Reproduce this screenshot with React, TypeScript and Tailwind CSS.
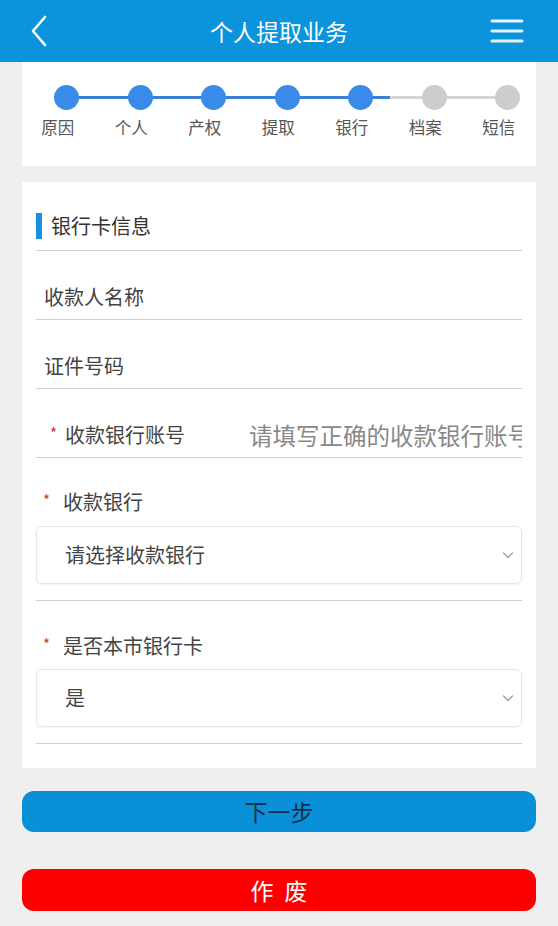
import React from 'react';

const steps = ['原因', '个人', '产权', '提取', '银行', '档案', '短信'];
const current = 4;

const Chevron = () => (
  <svg width="14" height="14" viewBox="0 0 14 14" fill="none">
    <path d="M2.5 5 L7 9.5 L11.5 5" stroke="#9a9a9a" strokeWidth="1.2" strokeLinecap="round" strokeLinejoin="round" />
  </svg>
);

const Required = () => (
  <span className="text-[#cc3333] text-[15px] leading-[22px] mr-[8px] relative top-[-2px]">*</span>
);

const Divider = ({ className = '' }: { className?: string }) => <div className={`h-[1px] bg-[#cfcfcf] ${className}`} />;

const App: React.FC = () => {
  return (
    <div
      className="w-[558px] min-h-[926px] bg-[#efefef] pb-[14px]"
      style={{ fontFamily: '"Noto Sans CJK SC", "Noto Sans", sans-serif' }}
    >
      {/* Header */}
      <div className="h-[62px] bg-[#0b93db] flex items-center justify-between px-[28px] relative">
        <svg width="22" height="34" viewBox="0 0 22 34" fill="none">
          <path d="M17 3 L5 17 L17 31" stroke="#ffffff" strokeWidth="2.6" strokeLinecap="round" strokeLinejoin="round" />
        </svg>
        <h1 className="absolute left-0 right-0 text-center text-white text-[23px] leading-[30px] pointer-events-none">
          个人提取业务
        </h1>
        <svg width="34" height="28" viewBox="0 0 34 28" fill="none" className="mr-[6px]">
          <path d="M2 4 H32 M2 14 H32 M2 24 H32" stroke="#e6f3fc" strokeWidth="3" strokeLinecap="round" />
        </svg>
      </div>

      {/* Steps */}
      <div className="mx-[22px] bg-white h-[104px] overflow-hidden pl-[8px] pt-[23px]">
        <div className="relative w-[514px]">
          <div className="absolute top-[11px] left-[37px] w-[441px] h-[3px] bg-[#d5d5d5]" />
          <div className="absolute top-[11px] left-[37px] w-[323px] h-[3px] bg-[#3b80d4]" />
          <div className="flex relative">
            {steps.map((s, i) => (
              <div key={s} className="w-[73.5px] shrink-0 flex flex-col items-center">
                <div className={`w-[25px] h-[25px] rounded-full ${i <= current ? 'bg-[#3a8ae9]' : 'bg-[#cdcdcd]'}`} />
                <span className="mt-[7px] mr-[18px] text-[16.5px] leading-[20px] text-[#555555]">{s}</span>
              </div>
            ))}
          </div>
        </div>
      </div>

      {/* Form card */}
      <div className="mx-[22px] mt-[16px] bg-white px-[14px] pt-[31px] pb-[24px]">
        <div className="flex items-center h-[26px]">
          <div className="w-[6px] h-[26px] bg-[#1a8fe0]" />
          <span className="ml-[9px] text-[20px] leading-[26px] text-[#333333]">银行卡信息</span>
        </div>
        <Divider className="mt-[11px]" />

        <div className="pl-[8px] pt-[35px] pb-[11px] text-[20px] leading-[22px] text-[#444444]">收款人名称</div>
        <Divider />

        <div className="pl-[8px] pt-[35px] pb-[11px] text-[20px] leading-[22px] text-[#444444]">证件号码</div>
        <Divider />

        <div className="flex items-center pl-[14px] pt-[35px] pb-[11px] overflow-hidden whitespace-nowrap">
          <Required />
          <span className="text-[20px] leading-[22px] text-[#444444] w-[184px] shrink-0">收款银行账号</span>
          <span className="text-[23.5px] leading-[22px] text-[#888888]">请填写正确的收款银行账号</span>
        </div>
        <Divider />

        <div className="flex items-center pl-[7px] pt-[33px]">
          <Required />
          <span className="ml-[5px] text-[20px] leading-[22px] text-[#444444]">收款银行</span>
        </div>
        <div className="mt-[13px] h-[58px] border border-[#e6e6e6] rounded-[6px] shadow-[0_1px_2px_rgba(0,0,0,0.05)] flex items-center justify-between pl-[28px] pr-[6px]">
          <span className="text-[20px] text-[#444444]">请选择收款银行</span>
          <Chevron />
        </div>
        <Divider className="mt-[16px]" />

        <div className="flex items-center pl-[7px] pt-[34px]">
          <Required />
          <span className="ml-[5px] text-[20px] leading-[22px] text-[#444444]">是否本市银行卡</span>
        </div>
        <div className="mt-[12px] h-[58px] border border-[#e6e6e6] rounded-[6px] shadow-[0_1px_2px_rgba(0,0,0,0.05)] flex items-center justify-between pl-[28px] pr-[6px]">
          <span className="text-[20px] text-[#444444]">是</span>
          <Chevron />
        </div>
        <Divider className="mt-[16px]" />
      </div>

      {/* Buttons */}
      <div className="mx-[22px] mt-[23px] flex flex-col gap-[37px]">
        <button className="h-[41px] rounded-[12px] bg-[#0a90d8] text-[#10304d] text-[23px] leading-[41px]">下一步</button>
        <button className="h-[42px] rounded-[12px] bg-[#fb0000] text-white text-[23px] leading-[42px] tracking-[3px] pl-[3px]">作 废</button>
      </div>
    </div>
  );
};

export default App;
